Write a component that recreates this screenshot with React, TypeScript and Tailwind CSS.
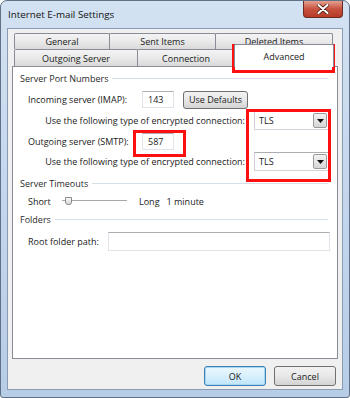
import React from "react";

const font = { fontFamily: '"Open Sans", "Noto Sans", sans-serif' };

function Tab({ label, w, first }: { label: string; w: number; first?: boolean }) {
  return (
    <div
      className={`h-full flex items-center justify-center border border-[#898c95] border-b-0 rounded-t-[2px] bg-gradient-to-b from-[#f4f4f4] via-[#e9e9e9] to-[#d9d9d9] text-[#1a1a1a] ${first ? "" : "-ml-px"}`}
      style={{ width: w }}
    >
      {label}
    </div>
  );
}

function GroupHeader({ label, className }: { label: string; className?: string }) {
  return (
    <div className={`flex items-center h-[13px] pl-[7px] pr-[9px] ${className ?? ""}`}>
      <span className="text-[#2b2b2b] pr-[4px]">{label}</span>
      <div className="flex-1 h-px bg-[#d5dfe5]" />
    </div>
  );
}

function TextBox({ value, w, h }: { value?: string; w: number; h: number }) {
  return (
    <div
      className="flex items-center bg-white border border-[#dfe3ea] border-t-[#abadb3] pl-[5px] text-[#1a1a1a]"
      style={{ width: w, height: h }}
    >
      {value}
    </div>
  );
}

function Combo() {
  return (
    <div className="w-[75px] h-[19px] bg-white border border-[#d0d3da] border-t-[#abadb3] flex items-center justify-between pl-[4px] pr-[1px]">
      <span className="text-[#1a1a1a]">TLS</span>
      <div className="w-[14px] h-[15px] border border-[#9a9a9a] rounded-[2px] bg-gradient-to-b from-[#f3f3f3] to-[#d6d6d6] flex items-center justify-center">
        <svg width="7" height="4" viewBox="0 0 7 4">
          <path d="M0 0 H7 L3.5 4 Z" fill="#111" />
        </svg>
      </div>
    </div>
  );
}

export default function App() {
  return (
    <div
      className="w-[350px] h-[398px] flex flex-col bg-gradient-to-b from-[#d3e2f2] via-[#c3d6ec] to-[#b7cde6] border border-[#5f7087] rounded-t-[7px] rounded-b-[3px] text-[9px] leading-none relative overflow-hidden"
      style={font}
    >
      {/* title bar */}
      <div className="h-[27px] flex items-start justify-between">
        <div className="pl-[7px] pt-[9px] text-[9.8px] text-[#111]">Internet E-mail Settings</div>
        <div className="mr-[6px] w-[40px] h-[17px] rounded-b-[4px] border border-t-0 border-[#6d2a22] bg-gradient-to-b from-[#e2a091] via-[#c8513e] to-[#b43b27] flex items-center justify-center">
          <svg width="12" height="10" viewBox="0 0 12 10">
            <path d="M1.5 1 L10.5 9 M10.5 1 L1.5 9" stroke="#4a1c16" strokeWidth="3.6" strokeLinecap="round" />
            <path d="M1.5 1 L10.5 9 M10.5 1 L1.5 9" stroke="#ffffff" strokeWidth="2" strokeLinecap="round" />
          </svg>
        </div>
      </div>

      {/* client */}
      <div className="flex-1 mx-[6px] mb-[7px] bg-[#f0f0f0] border border-[#8a9cb4] flex flex-col">
        {/* tabs */}
        <div className="pl-[6px] pr-[6px] pt-[4px] flex flex-col">
          <div className="h-[16px] flex">
            <Tab label="General" w={96} first />
            <Tab label="Sent Items" w={107} />
            <Tab label="Deleted Items" w={118} />
          </div>
          <div className="h-[17px] flex items-end">
            <Tab label="Outgoing Server" w={124} first />
            <Tab label="Connection" w={98} />
            <div className="relative z-10 -ml-px -mt-[5px] h-[23px] w-[100px] mb-[-1px] bg-white border border-[#898c95] border-b-0 rounded-t-[2px] flex justify-center pt-[7px] text-[#1a1a1a]">
              Advanced
            </div>
          </div>
        </div>

        {/* panel */}
        <div className="mx-[4px] h-[293px] bg-white border border-[#898c95] flex flex-col text-[#1a1a1a]">
          <GroupHeader label="Server Port Numbers" className="mt-[5px]" />

          <div className="mt-[6px] h-[17px] flex items-center pl-[15px]">
            <div className="w-[114px]">Incoming server (IMAP):</div>
            <TextBox value="143" w={32} h={17} />
            <div className="ml-[9px] w-[65px] h-[18px] rounded-[3px] border border-[#707070] bg-gradient-to-b from-[#f2f2f2] via-[#e8e8e8] to-[#d3d3d3] flex items-center justify-center">
              Use Defaults
            </div>
          </div>

          <div className="mt-[3px] h-[19px] flex items-center justify-end pr-[8px] gap-[9px]">
            <span>Use the following type of encrypted connection:</span>
            <Combo />
          </div>

          <div className="mt-[3px] h-[17px] flex items-center pl-[15px]">
            <div className="w-[114px]">Outgoing server (SMTP):</div>
            <TextBox value="587" w={32} h={17} />
          </div>

          <div className="mt-[2px] h-[19px] flex items-center justify-end pr-[8px] gap-[9px]">
            <span>Use the following type of encrypted connection:</span>
            <Combo />
          </div>

          <GroupHeader label="Server Timeouts" className="mt-[6px]" />

          <div className="mt-[4px] h-[14px] flex items-center pl-[15px]">
            <span className="w-[34px]">Short</span>
            <div className="relative w-[65px] h-[10px] flex items-center">
              <div className="w-full h-[2px] border-t border-[#a8a8a8] border-b border-b-white bg-[#e7e7e7]" />
              <div className="absolute left-[3px] top-[1px] w-[7px] h-[8px] border border-[#8a8a8a] rounded-b-[3px] bg-gradient-to-b from-[#fafafa] to-[#dadada]" />
            </div>
            <span className="ml-[12px]">Long</span>
            <span className="ml-[7px]">1 minute</span>
          </div>

          <GroupHeader label="Folders" className="mt-[5px]" />

          <div className="mt-[6px] h-[19px] flex items-center pl-[15px] pr-[7px]">
            <div className="w-[80px]">Root folder path:</div>
            <div className="flex-1 h-[19px] bg-white border border-[#dfe3ea] border-t-[#abadb3]" />
          </div>
        </div>

        {/* buttons */}
        <div className="mt-[7px] flex justify-end gap-[8px] pr-[6px]">
          <div className="w-[62px] h-[20px] rounded-[3px] border border-[#3c7fb1] bg-gradient-to-b from-[#ecf7fd] via-[#d9f0fc] to-[#bde5fa] flex items-center justify-center text-[#1a1a1a] shadow-[inset_0_0_0_1px_#a6d8f5]">
            OK
          </div>
          <div className="w-[62px] h-[20px] rounded-[3px] border border-[#707070] bg-gradient-to-b from-[#f2f2f2] via-[#e8e8e8] to-[#d3d3d3] flex items-center justify-center text-[#1a1a1a]">
            Cancel
          </div>
        </div>
      </div>

      {/* red annotation boxes */}
      <div className="absolute left-[231px] top-[43px] w-[103px] h-[29px] border-[3px] border-[#ff1010]" />
      <div className="absolute left-[245px] top-[108px] w-[85px] h-[73px] border-[3px] border-[#ff1010]" />
      <div className="absolute left-[132px] top-[129px] w-[53px] h-[27px] border-[3px] border-[#ff1010]" />
    </div>
  );
}
